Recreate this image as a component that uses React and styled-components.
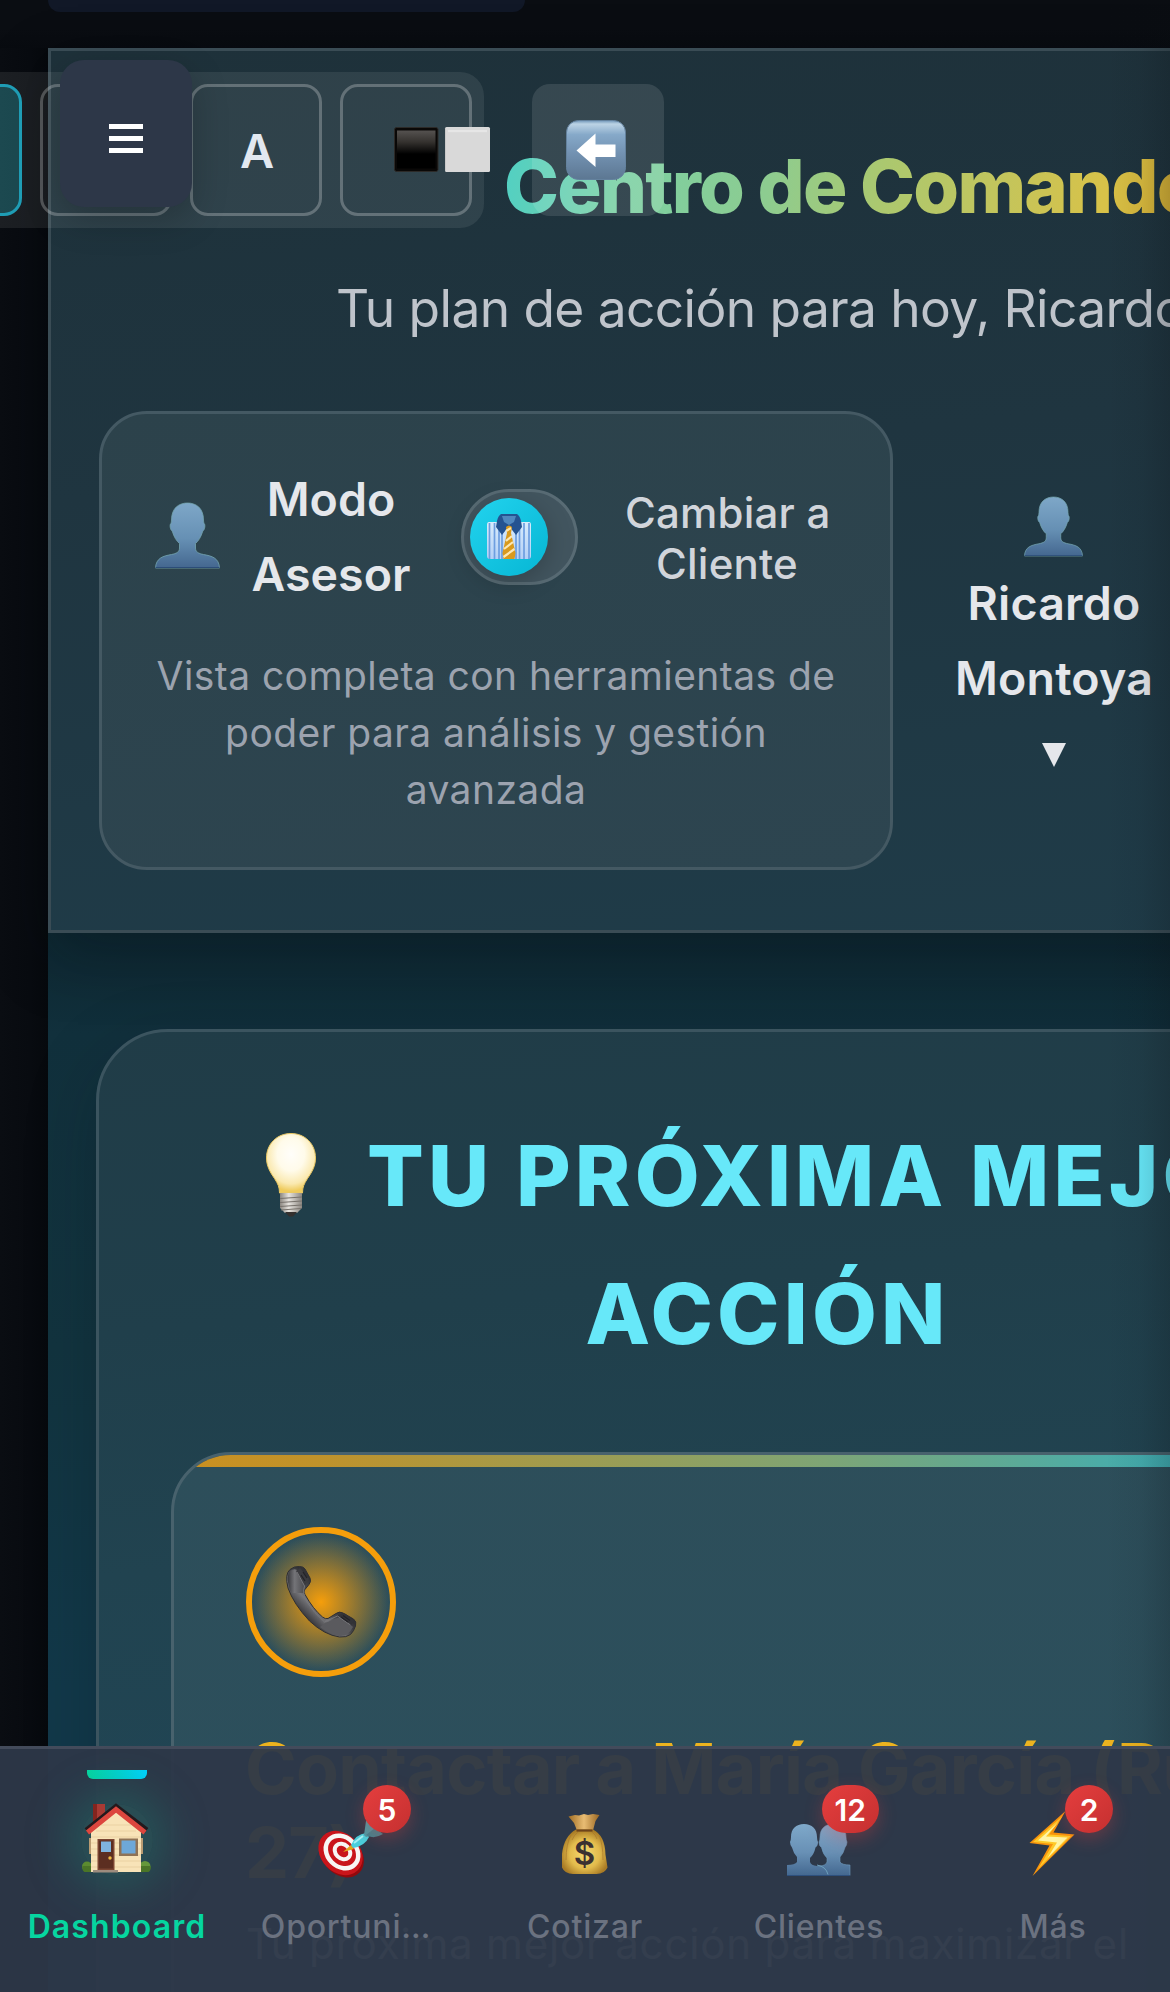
import React from "react";
import styled, { createGlobalStyle, css } from "styled-components";

const GlobalStyle = createGlobalStyle`
  *, *::before, *::after { box-sizing: border-box; }
  html, body { margin: 0; padding: 0; background: #0a0d12; overflow: hidden; }
  body { font-family: Inter, "Liberation Sans", sans-serif; color: #e5e7eb; }
  svg { display: block; flex: none; overflow: visible; }
`;

/* ---------- page shell ---------- */

const Page = styled.div`
  position: relative;
  display: flex;
  flex-direction: column;
  width: 1170px;
  height: 1992px;
  padding-left: 48px;
  overflow: hidden;
  background: linear-gradient(90deg, #0a0d12 0, #080b10 30px, #06090d 48px, #0a0d12 49px);
`;

const EdgeShade = styled.div`
  position: absolute;
  top: 0;
  right: 0;
  bottom: 0;
  width: 64px;
  pointer-events: none;
  background: linear-gradient(90deg, rgba(10, 14, 18, 0), rgba(10, 14, 18, 0.06) 55%, rgba(10, 14, 18, 0.2));
`;

const TopStrip = styled.div`
  flex: none;
  height: 48px;
  margin-left: -48px;
  padding-left: 48px;
  background: linear-gradient(180deg, #0a0d12 0, #0a0d12 60%, #080b10 100%);
`;

const StripCard = styled.div`
  width: 477px;
  height: 12px;
  border-radius: 0 0 18px 18px;
  background: #111827;
`;

const Content = styled.main`
  display: flex;
  flex-direction: column;
  flex: none;
  width: 1434px;
  background: linear-gradient(180deg, #0e2832 885px, #11303c 985px, #12343f 1300px, #12394a 1640px, #12394a 1944px);
`;

/* ---------- header ---------- */

const Header = styled.header`
  flex: none;
  height: 885px;
  padding: 90px 48px 0;
  border: 3px solid #3a4c55;
  background: linear-gradient(175deg, #1e313a 0%, #1f3540 45%, #1f3c49 100%);
  box-shadow: 0 24px 60px rgba(3, 12, 18, 0.28);
  white-space: nowrap;
`;

const Title = styled.h1`
  width: max-content;
  margin: 0 0 40px 405px;
  font-size: 74px;
  line-height: 90px;
  font-weight: 800;
  letter-spacing: -1.75px;
  color: transparent;
  background: linear-gradient(
    98deg,
    #50d0c4 0%,
    #7bd0a4 17%,
    #8dcc90 38%,
    #abc86f 54%,
    #c2c55d 70%,
    #d8c248 86%,
    #dab233 96%,
    #dca92c 100%
  );
  background-clip: text;
  -webkit-background-clip: text;
`;

const Subtitle = styled.p`
  margin: 0 0 65px 237px;
  font-size: 51.5px;
  line-height: 75px;
  letter-spacing: -0.6px;
  color: #bfc4cb;
`;

const ControlRow = styled.div`
  display: flex;
  align-items: flex-start;
  gap: 48px;
`;

const ModeCard = styled.section`
  flex: none;
  width: 794px;
  height: 459px;
  padding: 48px 50px;
  border: 3px solid #445963;
  border-radius: 48px;
  background: linear-gradient(170deg, #2c424b, #2d4550);
`;

const ModeRow = styled.div`
  display: flex;
  align-items: center;
  height: 150px;
  margin-bottom: 35px;

  > svg { margin: 0 0 3px 3px; }
`;

const ModeLabel = styled.div`
  width: 160px;
  margin: 0 50px 0 31px;
  font-size: 46.5px;
  line-height: 75px;
  font-weight: 600;
  text-align: center;
`;

const SwitchLabel = styled.div`
  width: 204px;
  margin-left: 47px;
  padding-top: 2px;
  font-size: 42px;
  line-height: 51px;
  font-weight: 500;
  letter-spacing: 0.2px;
  text-align: center;
  color: #d1d5db;
`;

const Toggle = styled.button`
  display: flex;
  align-items: center;
  flex: none;
  width: 117px;
  height: 96px;
  padding: 0 6px;
  border: 3px solid #586b74;
  border-radius: 48px;
  background: #42555f;
`;

const Knob = styled.span`
  display: flex;
  align-items: center;
  justify-content: center;
  width: 78px;
  height: 78px;
  border-radius: 50%;
  background: linear-gradient(135deg, #22d3ee, #06b6d4);
  box-shadow: 0 6px 24px rgba(0, 0, 0, 0.22);
`;

const ModeText = styled.p`
  margin: 0;
  font-size: 39px;
  line-height: 57px;
  letter-spacing: 0.43px;
  text-align: center;
  color: #9ca3af;
`;

const UserMenu = styled.div`
  display: flex;
  flex-direction: column;
  align-items: center;
  width: 226px;
  padding-top: 86px;
  font-size: 46.5px;
  line-height: 75px;
  font-weight: 600;
  letter-spacing: 0.2px;

  svg:first-child { margin: 0 2px 10px 0; }
  svg:last-child { margin-top: 27px; }
`;

/* ---------- next best action ---------- */

const ActionCard = styled.section`
  flex: none;
  width: 1338px;
  height: 1100px;
  margin: 96px 48px 0;
  padding: 75px 72px 0;
  border: 3px solid #3b545f;
  border-radius: 72px;
  background: linear-gradient(175deg, #203c47 0%, #203f4b 25%, #214350 45%, #204656 75%);
  box-shadow: 0 24px 72px rgba(3, 20, 28, 0.22);
`;

const SectionTitle = styled.h2`
  display: flex;
  flex-direction: column;
  align-items: center;
  margin: 0 0 69px;
  font-size: 84px;
  line-height: 138px;
  font-weight: 800;
  letter-spacing: 4.2px;
  white-space: nowrap;
  color: #67e8f9;
`;

const TitleLine = styled.span`
  display: flex;
  align-items: center;
  gap: 51px;
  ${(p) => (p.$start ? css`
    align-self: flex-start;
    margin-left: 95px;
  ` : css`
    padding-left: 5px;
  `)}

  svg { margin-bottom: 3px; }
`;

const TaskCard = styled.article`
  position: relative;
  height: 700px;
  padding: 72px;
  overflow: hidden;
  border: 3px solid #48626d;
  border-radius: 60px;
  background: linear-gradient(175deg, #2d4e5a 0%, #2c4f5c 50%, #2d505c 100%);
  white-space: nowrap;

  &::before {
    content: "";
    position: absolute;
    inset: 0 0 auto;
    height: 12px;
    background: linear-gradient(90deg, #cb901f 0%, #c0922a 12%, #7ea575 55%, #3eaeb5 85%, #27b4cf 100%);
  }
`;

const TaskIcon = styled.div`
  display: flex;
  align-items: center;
  justify-content: center;
  width: 150px;
  height: 150px;
  margin-bottom: 50px;
  border: 6px solid #f59e0b;
  border-radius: 50%;
  background: radial-gradient(circle, #f59e0b 0%, rgba(245, 158, 11, 0) 70%);
`;

const TaskTitle = styled.h3`
  margin: 0 0 15px -1px;
  font-size: 70px;
  line-height: 84px;
  font-weight: 700;
  letter-spacing: -0.73px;
  color: #ecb31f;
`;

const TaskText = styled.p`
  margin: 0;
  font-size: 42px;
  line-height: 68px;
  letter-spacing: 0.82px;
  color: #c5cad2;
`;

/* ---------- floating controls ---------- */

const Toolbar = styled.div`
  position: absolute;
  top: 72px;
  left: -122px;
  display: flex;
  gap: 18px;
  height: 156px;
  padding: 12px;
  border-radius: 24px;
  background: rgba(255, 255, 255, 0.08);
`;

const ToolButton = styled.button`
  display: flex;
  align-items: center;
  justify-content: center;
  flex: none;
  width: 132px;
  height: 132px;
  padding: 0 0 0 2px;
  border: 3px solid ${(p) => (p.$active ? "#1f9db5" : "rgba(255, 255, 255, 0.25)")};
  border-radius: 18px;
  background: ${(p) => (p.$active ? "rgba(28, 130, 142, 0.42)" : "transparent")};
  color: #e2e8f0;
  font: 600 47px Inter, sans-serif;

  ${(p) => p.$wide && css`
    justify-content: flex-start;
    padding-left: 51px;
  `}
`;

const BackButton = styled.button`
  position: absolute;
  top: 84px;
  left: 532px;
  display: flex;
  justify-content: center;
  width: 132px;
  height: 132px;
  padding: 36px 0 0;
  border: 0;
  border-radius: 18px;
  background: rgba(255, 255, 255, 0.11);

  svg { margin-left: -4px; }
`;

const MenuButton = styled.button`
  position: absolute;
  top: 60px;
  left: 60px;
  display: flex;
  flex-direction: column;
  align-items: center;
  justify-content: center;
  gap: 7px;
  width: 132px;
  height: 147px;
  padding: 10px 0 0;
  border: 0;
  border-radius: 24px;
  background: #2d3748;
  box-shadow: 0 12px 36px rgba(0, 0, 0, 0.22);
`;

const MenuBar = styled.span`
  width: 34px;
  height: 5px;
  background: #fff;
`;

/* ---------- bottom navigation ---------- */

const Nav = styled.nav`
  position: absolute;
  left: 0;
  right: 0;
  bottom: 0;
  display: grid;
  grid-template-columns: repeat(5, 1fr);
  height: 246px;
  border-top: 3px solid #434b5b;
  background: rgba(45, 55, 72, 0.955);
`;

const NavItem = styled.a`
  position: relative;
  display: flex;
  flex-direction: column;
  align-items: center;
  gap: 31px;
  padding-top: 55px;
  color: ${(p) => (p.$active ? "#06d6a0" : "#6b7280")};
  font-size: 32px;
  line-height: 40px;
  font-weight: ${(p) => (p.$active ? 600 : 500)};
  letter-spacing: ${(p) => (p.$active ? "1.1px" : "0.8px")};

  ${(p) => p.$active && css`
    &::before {
      content: "";
      position: absolute;
      top: 21px;
      width: 60px;
      height: 9px;
      border-radius: 0 0 6px 6px;
      background: linear-gradient(90deg, #06d6a0, #00d4ff);
    }
  `}
`;

const NavLabel = styled.span`
  padding-right: ${(p) => (p.$clipped ? "10px" : 0)};
`;

const NavIcon = styled.span`
  position: relative;
  display: block;
  width: 72px;
  height: 72px;
  border-radius: 50%;
  ${(p) => p.$glow && css`
    background: rgba(38, 96, 94, 0.5);
    box-shadow: 0 0 42px 14px rgba(28, 120, 108, 0.42);
  `}
`;

const Badge = styled.span`
  position: absolute;
  top: -19px;
  right: -24px;
  display: flex;
  align-items: center;
  justify-content: center;
  min-width: 48px;
  height: 48px;
  padding: 1px 13px 0;
  border-radius: 24px;
  background: linear-gradient(135deg, #e53e3e, #c53030);
  box-shadow: 0 6px 18px rgba(229, 62, 62, 0.3);
  color: #fff;
  font-size: 30px;
  line-height: 36px;
  font-weight: 600;
  letter-spacing: 0;
`;

/* ---------- icons ---------- */

const Person = ({ size }) => (
  <svg width={size} height={size} viewBox="0 0 65 65">
    <defs>
      <linearGradient id="bust" x1="0" y1="0" x2="0" y2="1">
        <stop offset="0" stopColor="#7ea7c8" />
        <stop offset="0.55" stopColor="#6690b4" />
        <stop offset="1" stopColor="#44678f" />
      </linearGradient>
    </defs>
    <path
      d="M32.5 0C41 0 48.500 5 48.500 17c0 1.500.2 2.500.5 3.500 1.500.5 1 6.500-1.200 7.500-1.800 6-4.300 10-7.300 12.500v4.500c0 4 3 5.500 8 6.500 8.500 1.500 15.500 3.500 16 13.500H.5C1 55 8 53 16.500 51.500c5-1 8-2.500 8-6.500v-4.500c-3-2.500-5.500-6.500-7.300-12.500-2.200-1-2.700-7-1.200-7.500.3-1 .5-2 .5-3.500C16.500 5 24 0 32.500 0Z"
      fill="url(#bust)"
      stroke="#74a5ae"
      strokeWidth="0.8"
    />
    <path d="M.5 64.500h64" stroke="#2c4d78" strokeWidth="1" />
  </svg>
);

const Caret = () => (
  <svg width="24" height="24" viewBox="0 0 24 24">
    <path d="M0 0h24L12 24Z" fill="#e5e7eb" />
  </svg>
);

const Shirt = () => (
  <svg width="46" height="46" viewBox="0 0 46 46">
    <defs>
      <linearGradient id="cloth" x1="0" y1="0" x2="0" y2="1">
        <stop offset="0" stopColor="#d8ecfc" />
        <stop offset="1" stopColor="#b4d0f6" />
      </linearGradient>
    </defs>
    <path d="M3 8h11l9 5 9-5h11q2 0 2 3v31q0 3-3 3H4q-3 0-3-3V11q0-3 2-3Z" fill="url(#cloth)" />
    <path d="M3.500 9v36M8.500 9v36M13 9v36M16 14v31M30 14v31M33.500 9v36M38 9v36M43 9v36" stroke="#6d9ee0" strokeWidth="1.700" />
    <path d="M15 0h16q3 2 4 7l1 6-6 8-7-9-7 9-6-8 1-6q1-5 4-7Z" fill="#245391" />
    <path d="M16 2h14l-2 6-5 3-5-3Z" fill="#5087be" />
    <path d="M20 13q3-3 6 0l-1 6 4.500 20-1 6h-11l-1-6 4.500-20Z" fill="#d99a1d" />
    <path d="m20 17 5-3M20 27l6-5M18 35l9-7M17.500 43l11-8" stroke="#fbe7b3" strokeWidth="2.200" />
  </svg>
);

const Squares = () => (
  <svg width="96" height="46" viewBox="0 0 96 46">
    <defs>
      <linearGradient id="blackTile" x1="0" y1="0" x2="0" y2="1">
        <stop offset="0" stopColor="#555250" />
        <stop offset="0.3" stopColor="#35322f" />
        <stop offset="0.62" stopColor="#000" />
      </linearGradient>
    </defs>
    <rect x="0.500" y="0.500" width="43.500" height="44" rx="2" fill="#0a0807" stroke="#2c2a28" />
    <rect x="3" y="3.500" width="38.500" height="38" fill="url(#blackTile)" />
    <rect x="51" y="0" width="45" height="45" rx="1.500" fill="#d9d9d9" />
    <rect x="54" y="3" width="39" height="2.200" fill="#e6e6e6" />
    <path d="M51.500 1v43" stroke="#c9c9c9" />
  </svg>
);

const BackArrow = () => (
  <svg width="60" height="60" viewBox="0 0 60 60">
    <defs>
      <linearGradient id="key" x1="0" y1="0" x2="0" y2="1">
        <stop offset="0" stopColor="#7096b9" />
        <stop offset="0.06" stopColor="#bcd3e5" />
        <stop offset="0.24" stopColor="#86a9c9" />
        <stop offset="0.55" stopColor="#7392b2" />
        <stop offset="1" stopColor="#5c7792" />
      </linearGradient>
    </defs>
    <rect x="0.500" y="0.500" width="59" height="59" rx="12" fill="url(#key)" stroke="#64829e" />
    <path d="M10.500 30.500 29.500 13.500v11H49.500v12.500H29.500v10Z" fill="#fff" />
  </svg>
);

const Bulb = () => (
  <svg width="50" height="84" viewBox="0 0 50 84">
    <defs>
      <radialGradient id="glass" cx="0.5" cy="0.35" r="0.62">
        <stop offset="0" stopColor="#fffefa" />
        <stop offset="0.45" stopColor="#fffbea" />
        <stop offset="0.8" stopColor="#fae9b0" />
        <stop offset="1" stopColor="#efcb5c" />
      </radialGradient>
      <linearGradient id="socket" x1="0" y1="0" x2="1" y2="0">
        <stop offset="0" stopColor="#8b8680" />
        <stop offset="0.4" stopColor="#e8e5e0" />
        <stop offset="1" stopColor="#8b8680" />
      </linearGradient>
    </defs>
    <path
      d="M25 .500C39 .500 49.500 11 49.500 25c0 8-3.500 14-8 20.500C38 51 36.500 54 36.500 60H13.500C13.500 54 12 51 8.500 45.500 4 39 .500 33 .500 25 .500 11 11 .500 25 .500Z"
      fill="url(#glass)"
      stroke="#e9c763"
      strokeWidth="1"
    />
    <path d="M14 60h22v15l-5 5H19l-5-5Z" fill="url(#socket)" />
    <path d="M14 65.500 36 64M14 69.500l22-1.500M14 73.500 36 72M15 77l20-1.500" stroke="#77726c" strokeWidth="1" />
    <path d="M19 79h12l-4 4.500h-4Z" fill="#34302e" />
  </svg>
);

const Phone = () => (
  <svg width="72" height="72" viewBox="0 0 72 72">
    <defs>
      <linearGradient id="handset" gradientUnits="userSpaceOnUse" x1="14" y1="46" x2="36" y2="24">
        <stop offset="0" stopColor="#333337" />
        <stop offset="0.45" stopColor="#77777b" />
        <stop offset="0.7" stopColor="#48484c" />
        <stop offset="1" stopColor="#323236" />
      </linearGradient>
      <linearGradient id="earpiece" x1="0" y1="0" x2="1" y2="0">
        <stop offset="0" stopColor="#38383c" />
        <stop offset="0.4" stopColor="#747478" />
        <stop offset="1" stopColor="#4a4a4e" />
      </linearGradient>
    </defs>
    <path
      d="M5 3.500Q9 0 14.500.500q4 0 5.500 2.500L25 12q1.500 3.500-1 6.500l-4.500 5.500q-1 2 .5 4.500 8 14.500 17.500 22.500 3 2.500 5.500 1.500L51 47.500q3.500-2.500 7-.500l10.500 6q3.500 2.500 2 7-1.500 5-5 8.500-4 3-11 2.500-15-2-30-16Q8.500 38 3 22-.500 8 5 3.500Z"
      fill="url(#handset)"
      stroke="#2f2f33"
      strokeWidth="1"
    />
    <path d="M5 5q4-3 7-1l8 15q-2 3-1 8L6 27Q0 11 5 5Z" fill="url(#earpiece)" />
    <path d="M40 57l12-5q5-1 7 1l9 8q-5 10-14 9-9-1-19-9Z" fill="#5a5a5e" />
    <path d="m15 2 9 11-4.500 7L11 5Z" fill="#3b3b3f" />
    <path d="M52 49l8-1.500 9 7-3 5Z" fill="#333337" />
    <path d="M12 6 19.500 20Q17 27 22 36q7 11 17.500 20l13-6 13 9" fill="none" stroke="#77777b" strokeWidth="1" />
    <path d="M18 6l4 6M16 9l4 6M58 49.500l7 5M56 51l7 5" stroke="#232327" strokeWidth="1.300" />
  </svg>
);

const House = () => (
  <svg width="72" height="72" viewBox="0 0 72 72">
    <circle cx="6" cy="62.500" r="5" fill="#5c8c30" />
    <circle cx="64" cy="62.500" r="5.500" fill="#65983a" />
    <path d="M1.500 62h9v6h-7q-3-2-2-6ZM60 62h9.500q1 4-2 6H60Z" fill="#4a7527" />
    <path d="M12 0h12v14L12 24Z" fill="#a83a34" />
    <path d="M12 0h4v20l-4 4Z" fill="#84241f" />
    <path d="M8 34h54v16H8Z" fill="#b99b72" />
    <path d="M10 25 35 4l25 21v43H10Z" fill="#f8e3b8" />
    <path d="M15 27h40M20 21h30M10 33h50M10 39h50M10 45h50M10 51h50M10 57h50M10 63h50" stroke="#e9cf9f" strokeWidth="0.900" />
    <path d="M5.500 26.500 35 3l30.500 23.500" fill="none" stroke="#24191d" strokeWidth="6" />
    <path d="M6.500 28.500 35 5.500l29 23" fill="none" stroke="#dc463e" strokeWidth="5" />
    <rect x="16.500" y="35" width="17" height="31" fill="#7b4532" />
    <rect x="18" y="36.500" width="14" height="28" fill="#5c2e21" />
    <rect x="20" y="37.500" width="10" height="10.500" fill="#7fb4de" />
    <circle cx="29" cy="54" r="1.700" fill="#f0b942" />
    <rect x="38" y="34.500" width="19" height="17.500" fill="#8f7356" />
    <rect x="40.500" y="36.500" width="14" height="13" fill="#6ea8d8" />
    <path d="M12 66h25v2.500H12Z" fill="#9d8c7e" />
  </svg>
);

const Target = () => (
  <svg width="72" height="72" viewBox="0 0 72 72">
    <ellipse cx="27" cy="51.500" rx="24.500" ry="19" transform="rotate(45 27 51.500)" fill="#92090d" />
    <ellipse cx="25.500" cy="49" rx="24.500" ry="19.500" transform="rotate(45 25.500 49)" fill="#c9151b" />
    <ellipse cx="27" cy="48" rx="17.800" ry="14.500" transform="rotate(45 27 48)" fill="none" stroke="#f8f6f4" strokeWidth="4.500" />
    <ellipse cx="27.500" cy="47.500" rx="8.500" ry="7" transform="rotate(45 27.500 47.500)" fill="none" stroke="#f8f6f4" strokeWidth="4" />
    <path d="m28 48 8-7 3 4Z" fill="#e0a51d" />
    <path d="M36 41q5-11 15-12l3 4q-4 9-16 11Z" fill="#49cfdc" />
    <path d="m49 31 2-14 7-6-1 11 12-1-7 9q-5 2-11 3Z" fill="#4a9aa5" />
    <path d="m51 31 9-7 8 6q-8 5-15 2Z" fill="#3f8390" />
    <path d="m39 39 9-7" stroke="#a2f0f4" strokeWidth="2" />
  </svg>
);

const Dollar = styled.text`
  font: 600 33px Inter, sans-serif;
  letter-spacing: 0;
  fill: #3b3131;
`;

const MoneyBag = () => (
  <svg width="72" height="72" viewBox="0 0 72 72">
    <defs>
      <radialGradient id="sack" cx="0.5" cy="0.55" r="0.55">
        <stop offset="0" stopColor="#f6db72" />
        <stop offset="0.6" stopColor="#e2bb4c" />
        <stop offset="1" stopColor="#a97b25" />
      </radialGradient>
      <linearGradient id="neck" x1="0" y1="0" x2="1" y2="0">
        <stop offset="0" stopColor="#a06d24" />
        <stop offset="0.5" stopColor="#e8bc73" />
        <stop offset="1" stopColor="#9a6723" />
      </linearGradient>
    </defs>
    <path d="M19.500 12.500 26 11l4 .500L35 10l4 1 5-1 6.500 1-4 6-2.500 9.500H28L25 19Z" fill="url(#neck)" />
    <path d="M27 25.500h17q12 6 12.500 25l2 13q-3 6.500-11 6.500H24q-8 0-11-6.500V50Q15 32 27 25.500Z" fill="url(#sack)" />
    <path d="M27.500 26.500h16" stroke="#6d431b" strokeWidth="2.200" />
    <path d="M22 31q-5 9-5 25M50 31q4 9 4 25M29 28q-4 3-6 8M43 28q4 3 5 7" fill="none" stroke="#a9792b" strokeWidth="1" opacity="0.7" />
    <Dollar x="35.500" y="61" textAnchor="middle">$</Dollar>
  </svg>
);

const People = () => (
  <svg width="72" height="72" viewBox="0 0 72 72">
    <defs>
      <linearGradient id="pair" gradientUnits="userSpaceOnUse" x1="0" y1="20" x2="0" y2="72">
        <stop offset="0" stopColor="#7fa9ca" />
        <stop offset="0.55" stopColor="#6890b5" />
        <stop offset="1" stopColor="#43678f" />
      </linearGradient>
      <path
        id="figure"
        d="M21 20c8 0 13 5 13 13q0 3 1 5 0 4-2.500 5.500-1.500 7-5.500 10.500v4q1 3.500 7 4 6 1 7.500 4v5.500H4V61q8 0 10-3v-5q-3.500-3.500-5-9.500Q7 41 7 38q1-2 1-5c0-8 5-13 13-13Z"
      />
    </defs>
    <use href="#figure" transform="matrix(-1 0 0 1 71 0)" fill="url(#pair)" stroke="#6d99ba" strokeWidth="0.600" />
    <use href="#figure" fill="url(#pair)" />
    <path d="M34 61q9 1.500 11 9.500" fill="none" stroke="#6fa1be" strokeWidth="1" />
    <path d="M4 71.500h63" stroke="#2e507d" strokeWidth="1" />
  </svg>
);

const Bolt = () => (
  <svg width="72" height="72" viewBox="0 0 72 72">
    <path d="M48.500 7 12.500 39l20 2.500L15.500 72l42-41.500-21-2Z" fill="#f7930c" />
    <path d="M45.500 12 16 38l20 2-15 25L54 32l-22-1.500Z" fill="#ffc928" />
    <path d="M41.500 18 21 36.500l19 2L30.500 54l20-20.500-21.500-1Z" fill="#fff6a6" />
  </svg>
);

/* ---------- page ---------- */

const tabs = [
  { label: "Dashboard", icon: <House />, active: true },
  { label: "Oportuni…", icon: <Target />, badge: 5, clipped: true },
  { label: "Cotizar", icon: <MoneyBag /> },
  { label: "Clientes", icon: <People />, badge: 12 },
  { label: "Más", icon: <Bolt />, badge: 2 },
];

export default function App() {
  return (
    <Page>
      <GlobalStyle />
      <TopStrip>
        <StripCard />
      </TopStrip>

      <Content>
        <Header>
          <Title>Centro de Comando</Title>
          <Subtitle>Tu plan de acción para hoy, Ricardo</Subtitle>
          <ControlRow>
            <ModeCard>
              <ModeRow>
                <Person size={65} />
                <ModeLabel>
                  Modo
                  <br />
                  Asesor
                </ModeLabel>
                <Toggle aria-label="Cambiar modo">
                  <Knob>
                    <Shirt />
                  </Knob>
                </Toggle>
                <SwitchLabel>
                  Cambiar a
                  <br />
                  Cliente
                </SwitchLabel>
              </ModeRow>
              <ModeText>
                Vista completa con herramientas de
                <br />
                poder para análisis y gestión
                <br />
                avanzada
              </ModeText>
            </ModeCard>
            <UserMenu>
              <Person size={59} />
              <span>Ricardo</span>
              <span>Montoya</span>
              <Caret />
            </UserMenu>
          </ControlRow>
        </Header>

        <ActionCard>
          <SectionTitle>
            <TitleLine $start>
              <Bulb />
              TU PRÓXIMA MEJOR
            </TitleLine>
            <TitleLine>ACCIÓN</TitleLine>
          </SectionTitle>
          <TaskCard>
            <TaskIcon>
              <Phone />
            </TaskIcon>
            <TaskTitle>
              Contactar a María García (Ruta
              <br />
              27)
            </TaskTitle>
            <TaskText>Tu próxima mejor acción para maximizar el</TaskText>
          </TaskCard>
        </ActionCard>
      </Content>

      <EdgeShade />

      <Toolbar>
        <ToolButton $active />
        <ToolButton />
        <ToolButton>A</ToolButton>
        <ToolButton $wide>
          <Squares />
        </ToolButton>
      </Toolbar>
      <BackButton aria-label="Volver">
        <BackArrow />
      </BackButton>
      <MenuButton aria-label="Menú">
        <MenuBar />
        <MenuBar />
        <MenuBar />
      </MenuButton>

      <Nav>
        {tabs.map((tab) => (
          <NavItem key={tab.label} $active={tab.active}>
            <NavIcon $glow={tab.active}>
              {tab.icon}
              {tab.badge && <Badge>{tab.badge}</Badge>}
            </NavIcon>
            <NavLabel $clipped={tab.clipped}>{tab.label}</NavLabel>
          </NavItem>
        ))}
      </Nav>
    </Page>
  );
}
